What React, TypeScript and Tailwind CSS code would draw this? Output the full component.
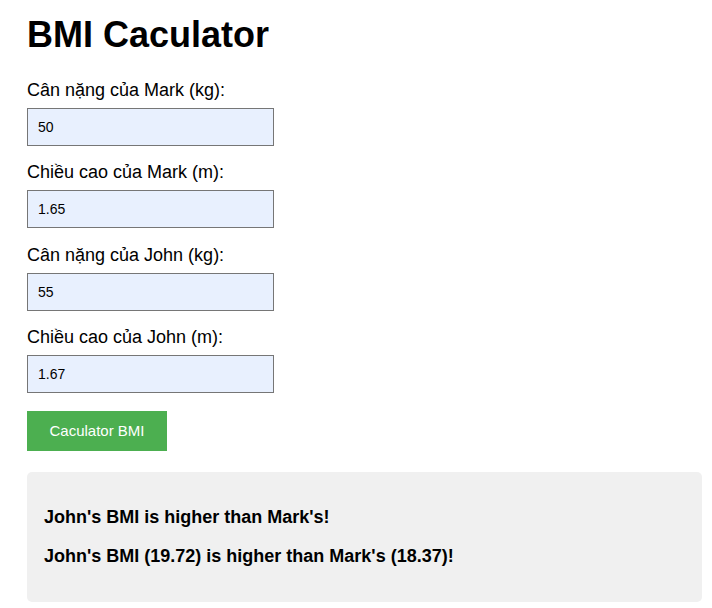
import { useState } from "react";

type Field = { key: string; label: string; value: string };

const initialFields: Field[] = [
  { key: "markWeight", label: "Cân nặng của Mark (kg):", value: "50" },
  { key: "markHeight", label: "Chiều cao của Mark (m):", value: "1.65" },
  { key: "johnWeight", label: "Cân nặng của John (kg):", value: "55" },
  { key: "johnHeight", label: "Chiều cao của John (m):", value: "1.67" },
];

export default function App() {
  const [fields, setFields] = useState<Field[]>(initialFields);

  const get = (key: string) => Number(fields.find((f) => f.key === key)?.value ?? 0);
  const markBMI = get("markWeight") / (get("markHeight") * get("markHeight"));
  const johnBMI = get("johnWeight") / (get("johnHeight") * get("johnHeight"));
  const johnHigher = johnBMI > markBMI;

  return (
    <div className="min-h-screen bg-white pl-[27px] pt-[14px] text-black font-['Liberation_Sans',Arial,sans-serif]">
      <h1 className="mb-[25px] text-[36px] font-bold leading-[41px]">BMI Caculator</h1>

      {fields.map((field) => (
        <div key={field.key} className="mb-[16.33px]">
          <label htmlFor={field.key} className="mb-[7px] block text-[18px] leading-[21px]">
            {field.label}
          </label>
          <input
            id={field.key}
            type="text"
            value={field.value}
            onChange={(e) =>
              setFields((prev) =>
                prev.map((f) => (f.key === field.key ? { ...f, value: e.target.value } : f))
              )
            }
            className="block h-[38px] w-[247px] border border-[#767676] bg-[#e8f0fe] px-[10px] text-[14px] leading-[16px] text-black outline-none"
          />
        </div>
      ))}

      <button
        type="button"
        className="mt-[18px] block h-[40px] w-[140px] bg-[#4caf50] text-[15px] text-white"
      >
        Caculator BMI
      </button>

      <div className="mt-[21px] flex h-[130px] w-[675px] flex-col gap-[18px] rounded-[5px] bg-[#f0f0f0] px-[17px] pt-[35px] text-[18px] font-bold leading-[21px]">
        <p>{johnHigher ? "John's BMI is higher than Mark's!" : "Mark's BMI is higher than John's!"}</p>
        <p>
          {johnHigher
            ? `John's BMI (${johnBMI.toFixed(2)}) is higher than Mark's (${markBMI.toFixed(2)})!`
            : `Mark's BMI (${markBMI.toFixed(2)}) is higher than John's (${johnBMI.toFixed(2)})!`}
        </p>
      </div>
    </div>
  );
}
